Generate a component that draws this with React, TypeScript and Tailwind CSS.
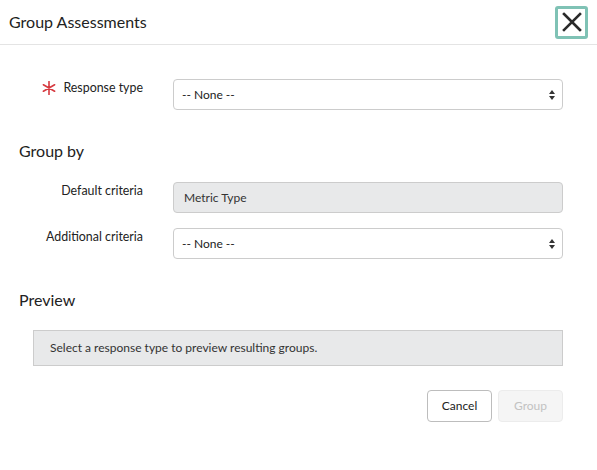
import React from "react";

function SelectArrows() {
  return (
    <svg width="8" height="12" viewBox="0 0 8 12" className="absolute right-[6px] top-1/2 -translate-y-1/2">
      <path d="M4 1 L7 5 L1 5 Z" fill="#333" />
      <path d="M4 11 L7 7 L1 7 Z" fill="#333" />
    </svg>
  );
}

function RequiredMark() {
  return (
    <svg width="14" height="14" viewBox="0 0 14 14" className="shrink-0">
      <path
        d="M7 0.5 L7 13.5 M1.4 3.75 L12.6 10.25 M1.4 10.25 L12.6 3.75"
        stroke="#d6393f"
        strokeWidth="1.6"
        strokeLinecap="round"
      />
    </svg>
  );
}

function FakeSelect({ value }: { value: string }) {
  return (
    <div className="relative flex h-[31px] flex-1 items-center rounded-[4px] border border-[#cccccc] bg-white pl-[8px] text-[12px] text-[#222]">
      {value}
      <SelectArrows />
    </div>
  );
}

function Row({
  label,
  required,
  children,
}: {
  label: string;
  required?: boolean;
  children: React.ReactNode;
}) {
  return (
    <div className="flex items-start">
      <div className="flex w-[143px] shrink-0 items-center justify-end gap-[7px] pt-[2px] text-[12.4px] text-[#222]">
        {required && <RequiredMark />}
        <span className="leading-[14px]">{label}</span>
      </div>
      <div className="ml-[30px] flex flex-1">{children}</div>
    </div>
  );
}

export default function App() {
  return (
    <div
      className="h-[470px] w-[597px] bg-white text-[#222]"
      style={{ fontFamily: "Lato, 'Noto Sans', sans-serif" }}
    >
      <div className="flex h-[45px] items-center justify-between border-b border-[#e4e4e4] pl-[9px] pr-[9px]">
        <h1 className="text-[16px] text-[#222]">Group Assessments</h1>
        <button className="flex h-[33px] w-[33px] items-center justify-center rounded-[3px] border-[3px] border-[#7fc2b5] bg-white">
          <svg width="20" height="20" viewBox="0 0 20 20">
            <path d="M2 2 L18 18 M18 2 L2 18" stroke="#2a2a2a" strokeWidth="2.6" strokeLinecap="square" />
          </svg>
        </button>
      </div>

      <div className="pr-[34px] pt-[34px]">
        <Row label="Response type" required>
          <FakeSelect value="-- None --" />
        </Row>

        <h2 className="ml-[19px] mt-[29px] text-[16px] text-[#222]">Group by</h2>

        <div className="mt-[19px] flex flex-col gap-[15px]">
          <Row label="Default criteria">
            <div className="flex h-[31px] flex-1 items-center rounded-[4px] border border-[#cccccc] bg-[#e8e9ea] pl-[10px] text-[12px] text-[#333]">
              Metric Type
            </div>
          </Row>
          <Row label="Additional criteria">
            <FakeSelect value="-- None --" />
          </Row>
        </div>

        <h2 className="ml-[19px] mt-[29px] text-[16px] text-[#222]">Preview</h2>

        <div className="ml-[33px] mt-[18px] flex h-[36px] items-center border border-[#cccccc] bg-[#e8e9ea] pl-[16px] text-[12px] text-[#333]">
          Select a response type to preview resulting groups.
        </div>

        <div className="mt-[24px] flex justify-end gap-[6px]">
          <button className="h-[32px] w-[65px] rounded-[4px] border border-[#bdbdbd] bg-white text-[12px] text-[#222]">
            Cancel
          </button>
          <button className="h-[32px] w-[65px] rounded-[4px] border border-[#ececec] bg-[#f5f5f5] text-[12px] text-[#c2c2c2]">
            Group
          </button>
        </div>
      </div>
    </div>
  );
}
